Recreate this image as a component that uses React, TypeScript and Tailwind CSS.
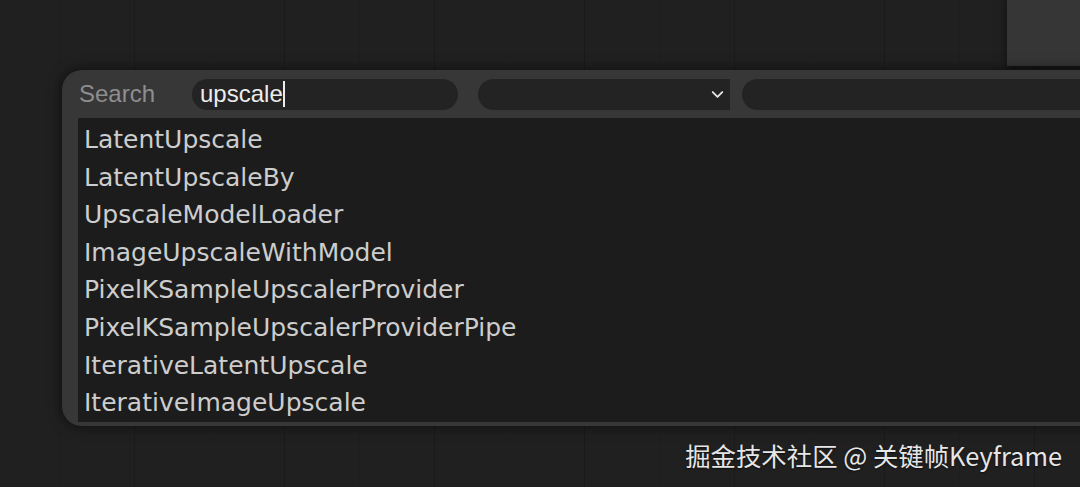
import { ChevronDown } from "lucide-react";

const results = [
  "LatentUpscale",
  "LatentUpscaleBy",
  "UpscaleModelLoader",
  "ImageUpscaleWithModel",
  "PixelKSampleUpscalerProvider",
  "PixelKSampleUpscalerProviderPipe",
  "IterativeLatentUpscale",
  "IterativeImageUpscale",
];

export default function App() {
  return (
    <div className="relative w-[1080px] h-[487px] overflow-hidden bg-[#202020] font-['Liberation_Sans',sans-serif]">
      {/* canvas grid */}
      <div className="absolute inset-0 bg-[linear-gradient(to_right,#181818_1px,transparent_1px)] bg-[length:150px_100%] bg-[position:134px_0]" />
      <div className="absolute inset-0 bg-[linear-gradient(to_right,#1c1c1c_1px,transparent_1px)] bg-[length:75px_100%] bg-[position:59px_0] opacity-60" />

      {/* node peeking at top right */}
      <div className="absolute left-[1007px] top-[-10px] w-[100px] h-[76px] bg-[#363636] shadow-[0_4px_10px_rgba(0,0,0,0.5)]" />

      {/* search dialog */}
      <div className="absolute left-[62px] top-[70px] w-[1060px] h-[356px] rounded-[20px] bg-[#373737] shadow-[0_0_14px_rgba(0,0,0,0.6)] flex flex-col">
        <div className="h-[48px] flex items-center shrink-0">
          <span className="w-[130px] pl-[17px] text-[24px] text-[#8e8e8e] leading-none">Search</span>
          <div className="w-[266px] h-[31px] rounded-full bg-[#232323] flex items-center pl-[8px]">
            <span className="text-[24px] text-[#ececec] leading-none">upscale</span>
            <span className="w-[2px] h-[26px] bg-[#ececec]" />
          </div>
          <div className="ml-[20px] w-[252px] h-[31px] rounded-l-full bg-[#232323] flex items-center justify-end pr-[3px]">
            <ChevronDown size={19} strokeWidth={2.4} className="text-[#e4e4e4]" />
          </div>
          <div className="ml-[12px] flex-1 h-[31px] rounded-l-full bg-[#232323]" />
        </div>
        <div className="ml-[16px] flex-1 mb-[5px] bg-[#1c1c1c] pl-[6px] pt-[3px] font-['DejaVu_Sans',sans-serif] text-[25px] text-[#cdcdcd] leading-[37.6px]">
          {results.map((r) => (
            <div key={r}>{r}</div>
          ))}
        </div>
      </div>

      {/* watermark */}
      <div className="absolute right-[18px] top-[437px] text-[25.4px] leading-[36px] text-[#e6e6e6] font-['Noto_Sans_CJK_SC','Noto_Sans',sans-serif] [text-shadow:0_1px_2px_rgba(0,0,0,0.6)]">
        掘金技术社区 @ 关键帧Keyframe
      </div>
    </div>
  );
}
